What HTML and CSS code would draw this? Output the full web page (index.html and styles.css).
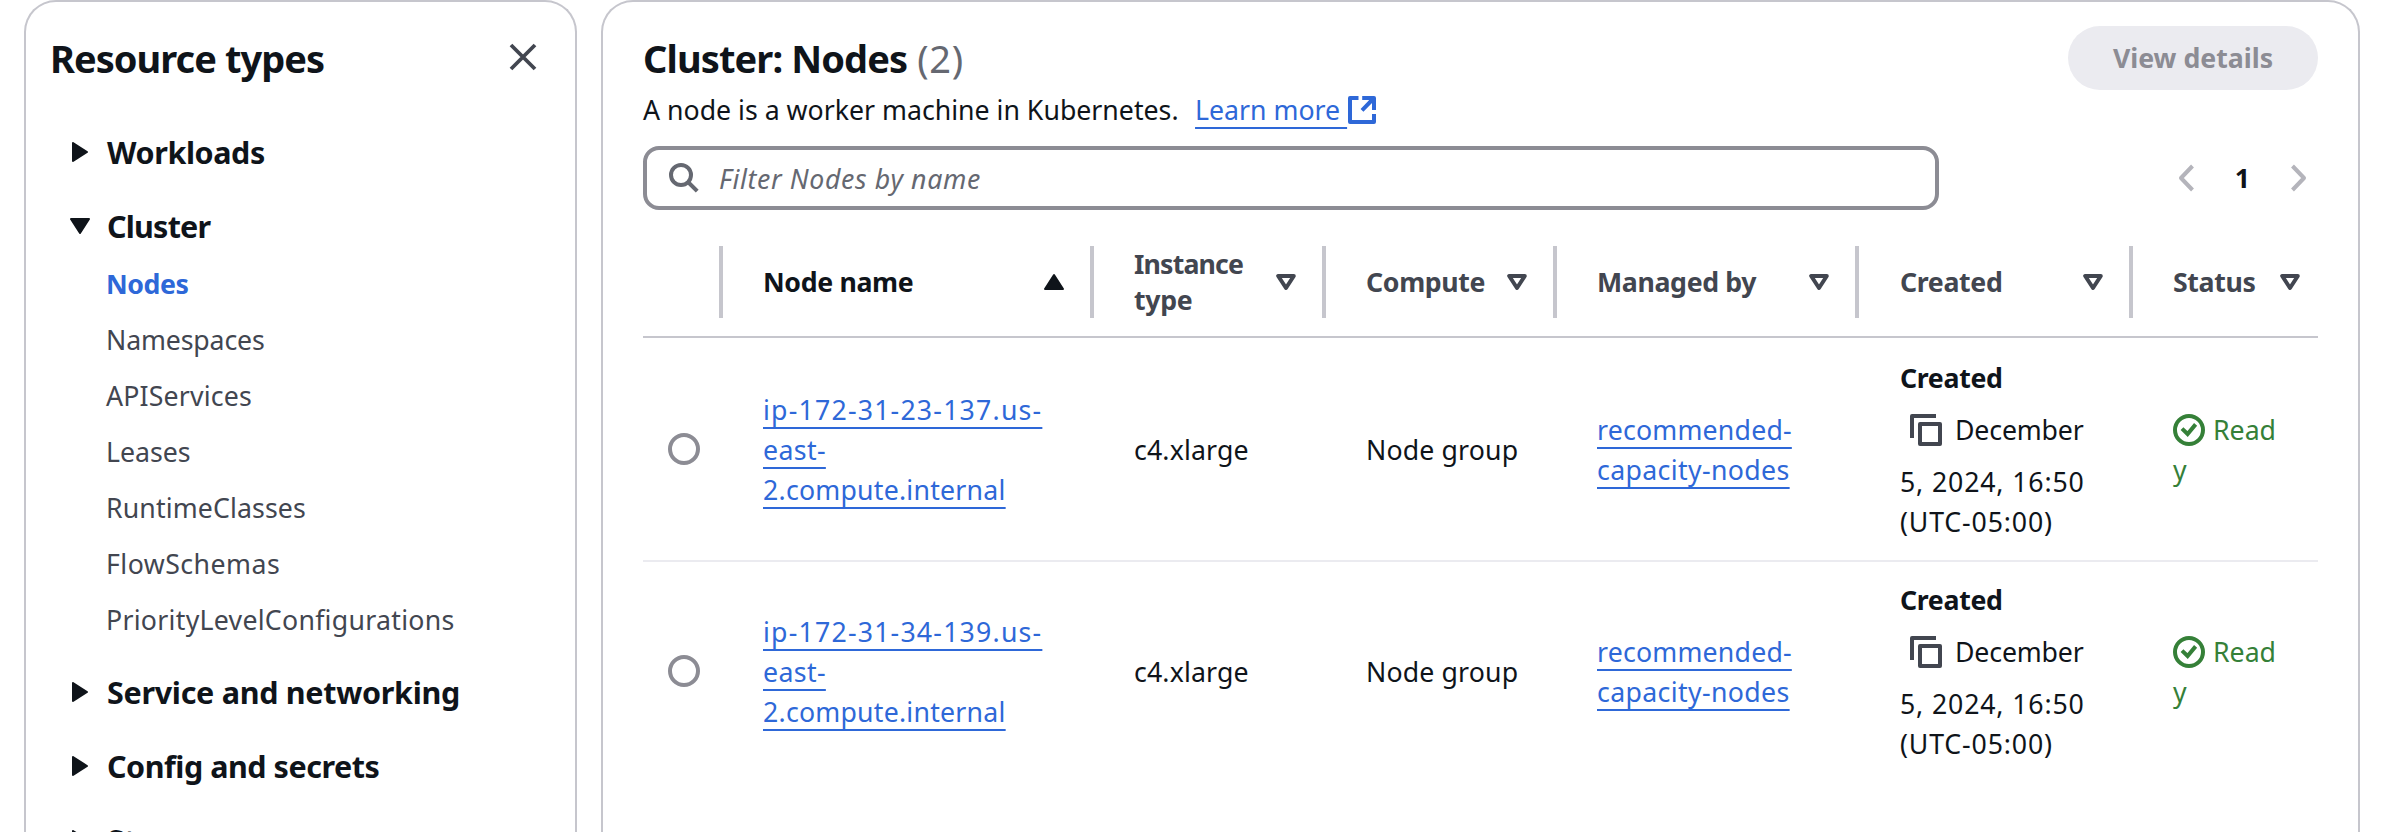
FILE: index.html
```html
<!DOCTYPE html>
<html lang="en">
<head>
<meta charset="utf-8">
<title>Cluster: Nodes</title>
<link rel="stylesheet" href="styles.css">
</head>
<body>
<svg class="sprite" aria-hidden="true">
  <symbol id="caret-right" viewBox="0 0 20 20"><path d="M3 1v18L17 10z" fill="currentColor" stroke="currentColor" stroke-width="2" stroke-linejoin="round"/></symbol>
  <symbol id="caret-down" viewBox="0 0 20 20"><path d="M1 3h18L10 17z" fill="currentColor" stroke="currentColor" stroke-width="2" stroke-linejoin="round"/></symbol>
  <symbol id="caret-up" viewBox="0 0 20 20"><path d="M1 17h18L10 3z" fill="currentColor" stroke="currentColor" stroke-width="2" stroke-linejoin="round"/></symbol>
  <symbol id="sort" viewBox="0 0 20 20"><path d="M2.2 4h15.6L10 16z" fill="none" stroke="currentColor" stroke-width="4" stroke-linejoin="round"/></symbol>
  <symbol id="copy" viewBox="0 0 32 32"><g fill="none" stroke="currentColor" stroke-width="4" stroke-linejoin="round"><path d="M2 24V2h24"/><path d="M10 10h20v20H10z"/></g></symbol>
  <symbol id="check" viewBox="0 0 32 32"><g fill="none" stroke="currentColor" stroke-width="4"><circle cx="16" cy="16" r="14"/><path d="M9 14.6l5.6 5.4L22.600 10.400"/></g></symbol>
</svg>
<div class="page">
  <aside class="panel sidebar">
    <header class="sidebar-head">
      <h2 class="title t-resource">Resource types</h2>
      <svg class="close" viewBox="0 0 28 28"><path d="M2 2l24 24M26 2L2 26" stroke="currentColor" stroke-width="3.800" fill="none"/></svg>
    </header>
    <nav class="sections">
      <div class="section t-40"><svg class="caret"><use href="#caret-right"/></svg>Workloads</div>
      <div class="section t-79"><svg class="caret"><use href="#caret-down"/></svg>Cluster</div>
      <ul class="links">
        <li class="active">Nodes</li>
        <li class="t-n14">Namespaces</li>
        <li class="t-17">APIServices</li>
        <li>Leases</li>
        <li class="t-12">RuntimeClasses</li>
        <li class="t-47">FlowSchemas</li>
        <li class="t-27">PriorityLevelConfigurations</li>
      </ul>
      <div class="section t-30"><svg class="caret"><use href="#caret-right"/></svg>Service and networking</div>
      <div class="section t-48"><svg class="caret"><use href="#caret-right"/></svg>Config and secrets</div>
      <div class="section t-30"><svg class="caret"><use href="#caret-right"/></svg>Storage</div>
    </nav>
  </aside>

  <main class="panel content">
    <header class="content-head">
      <h1 class="title t-cluster">Cluster: Nodes <span class="count">(2)</span></h1>
      <button class="view" disabled>View details</button>
    </header>
    <p class="desc">A node is a worker machine in Kubernetes.<a class="link learn">Learn more </a><svg class="external" viewBox="0 0 28 28"><g fill="none" stroke="currentColor" stroke-width="4" stroke-linejoin="round"><path d="M10.500 2H2v24h24v-8"/><path d="M14.200 2H26v12M26 2L14 14.300"/></g></svg></p>
    <div class="tools">
      <div class="filter">
        <svg class="search" viewBox="0 0 30 30"><g fill="none" stroke="currentColor" stroke-width="4"><circle cx="12" cy="12" r="10"/><path d="M19 19l9.200 9.200"/></g></svg>
        <span class="hint">Filter Nodes by name</span>
      </div>
      <div class="pager">
        <svg class="chev" viewBox="0 0 16 28"><path d="M14.500 2L3 14l11.500 12" stroke="currentColor" stroke-width="4" stroke-linejoin="round" fill="none"/></svg>
        <b>1</b>
        <svg class="chev" viewBox="0 0 16 28"><path d="M1.500 2L13 14 1.500 26" stroke="currentColor" stroke-width="4" stroke-linejoin="round" fill="none"/></svg>
      </div>
    </div>
    <div class="grid thead">
      <div class="th"></div>
      <div class="th sorted">Node name<svg><use href="#caret-up"/></svg></div>
      <div class="th"><span><span class="t-83">Instance</span><br>type</span><svg><use href="#sort"/></svg></div>
      <div class="th">Compute<svg><use href="#sort"/></svg></div>
      <div class="th">Managed by<svg><use href="#sort"/></svg></div>
      <div class="th created">Created<svg><use href="#sort"/></svg></div>
      <div class="th">Status<svg><use href="#sort"/></svg></div>
    </div>
    <div class="grid row">
      <div class="td pick"><i class="radio"></i></div>
      <div class="td"><a class="link"><span class="t-120">ip-172-31-23-137.us-</span><br><span class="t-35">east-</span><br><span class="t-23">2.compute.internal</span></a></div>
      <div class="td t-14">c4.xlarge</div>
      <div class="td t-14">Node group</div>
      <div class="td"><a class="link"><span class="t-20">recommended-</span><br><span class="t-35">capacity-nodes</span></a></div>
      <div class="td created"><div><b class="key">Created</b><div class="date"><svg class="glyph"><use href="#copy"/></svg><span class="t-n14">December</span></div><span class="t-85">5, 2024, 16:50<br>(UTC-05:00)</span></div></div>
      <div class="td"><div class="ready"><div class="ready-line"><svg class="glyph"><use href="#check"/></svg>Read</div>y</div></div>
    </div>
    <div class="grid row">
      <div class="td pick"><i class="radio"></i></div>
      <div class="td"><a class="link"><span class="t-120">ip-172-31-34-139.us-</span><br><span class="t-35">east-</span><br><span class="t-23">2.compute.internal</span></a></div>
      <div class="td t-14">c4.xlarge</div>
      <div class="td t-14">Node group</div>
      <div class="td"><a class="link"><span class="t-20">recommended-</span><br><span class="t-35">capacity-nodes</span></a></div>
      <div class="td created"><div><b class="key">Created</b><div class="date"><svg class="glyph"><use href="#copy"/></svg><span class="t-n14">December</span></div><span class="t-85">5, 2024, 16:50<br>(UTC-05:00)</span></div></div>
      <div class="td"><div class="ready"><div class="ready-line"><svg class="glyph"><use href="#check"/></svg>Read</div>y</div></div>
    </div>
  </main>
</div>
</body>
</html>
```
FILE: styles.css
```css
* { box-sizing: border-box; }
body {
  margin: 0;
  height: 832px;
  overflow: hidden;
  background: #fff;
  color: #0f141a;
  font: 400 26.7px/40px "Noto Sans", "Open Sans", sans-serif;
}
svg { display: block; flex: none; }
.sprite { display: none; }
.page { display: flex; gap: 24px; height: 832px; padding: 0 34px 0 24px; overflow: hidden; }
.panel {
  height: 832px;
  overflow: hidden;
  border: 2px solid #c6c6cd;
  border-bottom: 0;
  border-radius: 32px 32px 0 0;
  background: #fff;
}
.title { margin: 0; font-size: 38px; line-height: 64px; font-weight: 700; white-space: nowrap; }

/* Sidebar */
.sidebar { width: 553px; flex: none; padding: 24px 38px 0 23px; }
.sidebar-head { display: flex; justify-content: space-between; align-items: center; height: 64px; padding-left: 1px; }
.close { width: 28px; height: 28px; margin-bottom: 2px; color: #424650; }
.sections { display: flex; flex-direction: column; gap: 34px; padding: 42px 0 0 21px; }
.section { display: flex; flex: none; align-items: center; gap: 17px; height: 40px; font-size: 30.5px; font-weight: 700; }
.caret { width: 20px; height: 20px; color: #0f141a; }
.links { list-style: none; margin: -16px 0 -2px; padding: 0 0 0 36px; display: flex; flex-direction: column; gap: 16px; color: #424650; }
.active { color: #2e68d8; font-weight: 700; letter-spacing: -.42px; }

/* Content */
.content { flex: 1; padding: 24px 40px 0 40px; }
.content-head { display: flex; justify-content: space-between; height: 64px; }
.count { color: #656871; font-weight: 400; letter-spacing: .7px; margin-left: 1px; }
.view {
  width: 250px;
  height: 64px;
  border: 0;
  border-radius: 32px;
  background: #ebebf0;
  color: #8c8c94;
  font: 700 26.7px/64px "Noto Sans", "Open Sans", sans-serif;
  padding: 0;
}
.desc { display: flex; align-items: center; margin: 0; height: 40px; }
.link {
  color: #2e68d8;
  text-decoration: underline 2px;
  text-underline-offset: 7px;
  text-decoration-skip-ink: none;
}
.learn { margin-left: 16.5px; white-space: pre; }
.external { width: 28px; height: 28px; margin-left: 1px; color: #2e68d8; }
.tools { display: flex; justify-content: space-between; margin-top: 16px; }
.filter {
  display: flex;
  align-items: center;
  gap: 20px;
  width: 1296px;
  height: 64px;
  padding-left: 22px;
  border: 4px solid #8c8c94;
  border-radius: 16px;
  color: #656871;
}
.hint { padding-top: 2px; font-style: italic; letter-spacing: .65px; }
.search { width: 30px; height: 30px; }
.pager { display: flex; align-items: center; gap: 41px; padding-right: 11px; }
.chev { width: 16px; height: 28px; color: #b4b4bb; }

/* Table */
.grid {
  display: grid;
  grid-template-columns: 80px 371px 232px 231px 302px 274px 1fr;
}
.thead {
  margin-top: 36px;
  height: 92px;
  padding-bottom: 18px;
  border-bottom: 2px solid #c6c6cd;
}
.th {
  display: flex;
  align-items: center;
  justify-content: space-between;
  height: 72px;
  padding: 0 26px 0 40px;
  border-right: 4px solid #c6c6cd;
  color: #424650;
  font-weight: 700;
  line-height: 36px;
  letter-spacing: -.34px;
  white-space: nowrap;
}
.th svg { width: 20px; height: 20px; }
.th.sorted { color: #0f141a; }
.th:last-child { border: 0; padding-right: 18px; }
.row { height: 222px; }
.row + .row { box-shadow: inset 0 2px #ebebf0; }
.td { display: flex; align-items: center; padding: 2px 0 0 40px; white-space: nowrap; }
.th.created, .td.created { padding-left: 41px; }
.pick { padding: 0 0 0 25px; }
.radio { width: 32px; height: 32px; border: 4px solid #8c8c94; border-radius: 50%; }
.key { display: block; letter-spacing: -.33px; }
.date { display: flex; align-items: center; height: 64px; gap: 13px; padding-left: 10px; }
.glyph { width: 32px; height: 32px; color: #424650; }
.ready, .ready .glyph { color: #358038; }
.ready-line { display: flex; align-items: center; gap: 8px; }

/* Tracking */
.t-resource { letter-spacing: -.96px; }
.t-cluster { letter-spacing: -.89px; }
.t-n14 { letter-spacing: -.15px; }
.t-12 { letter-spacing: .12px; }
.t-14 { letter-spacing: .14px; }
.t-17 { letter-spacing: .17px; }
.t-20 { letter-spacing: .2px; }
.t-23 { letter-spacing: .23px; }
.t-27 { letter-spacing: .27px; }
.t-30 { letter-spacing: -.3px; }
.t-35 { letter-spacing: .36px; }
.t-40 { letter-spacing: -.4px; }
.t-47 { letter-spacing: .47px; }
.t-48 { letter-spacing: -.48px; }
.t-79 { letter-spacing: -.79px; }
.t-83 { letter-spacing: -.83px; }
.t-85 { letter-spacing: .85px; }
.t-120 { letter-spacing: 1.2px; }
```
